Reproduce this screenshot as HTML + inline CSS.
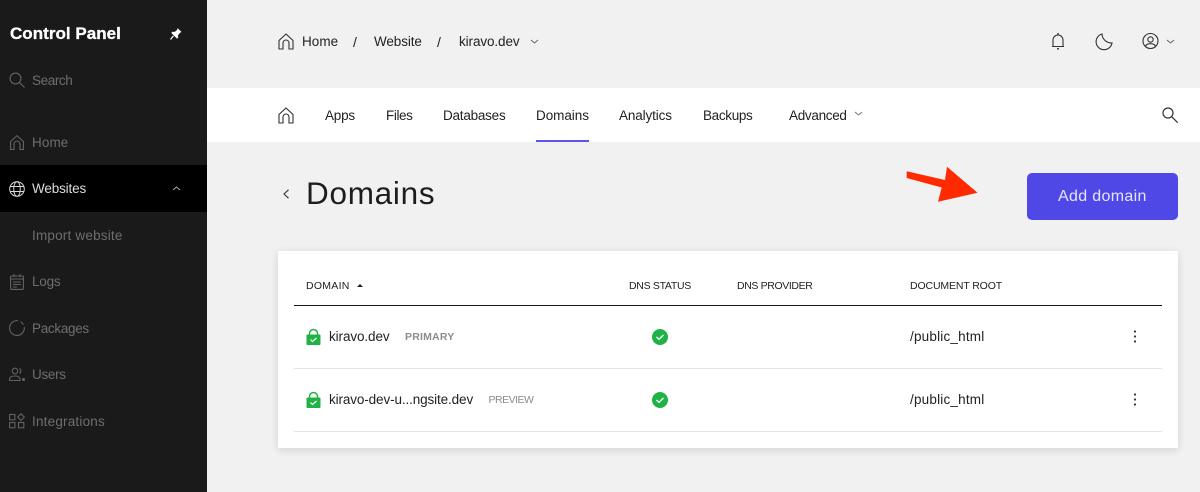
<!DOCTYPE html>
<html><head><meta charset="utf-8"><style>
html,body{margin:0;padding:0;width:1200px;height:492px;overflow:hidden;background:#f1f1f1}
body{position:relative;font-family:"Liberation Sans",sans-serif;color:#222}
.t{position:absolute;white-space:nowrap;line-height:16px;height:16px;font-size:13.5px}
.a{position:absolute;display:block}
svg{position:absolute;overflow:visible;fill:none}
.side{position:absolute;left:0;top:0;width:207px;height:492px;background:#1a1a1a}
.g{color:#6e6e6e}
.h{font-size:10.5px;color:#222}
</style></head><body>
<div class="side"></div>
<div class="a" style="left:0;top:165px;width:207px;height:47px;background:#000"></div>
<div class="t" style="left:10px;top:26px;color:#fff;font-size:17px;font-weight:bold;-webkit-text-stroke:.3px #fff;letter-spacing:.03px">Control Panel</div>
<svg style="left:168px;top:26px" width="16" height="16" viewBox="0 0 16 16"><path d="M9.500 2l4 4-1.300.6-2.200 2.600.2 2.400-1.200 1-5.700-5.700 1-1.200 2.400.2 2.600-2.200z" fill="#fff"/><path d="M5.500 9.800L2.500 13.500" stroke="#fff" stroke-width="1.200"/></svg>

<svg style="left:9px;top:72px" width="16" height="17" viewBox="0 0 16 17" stroke="#636363" stroke-width="1.100"><circle cx="6.500" cy="6.500" r="5.400"/><path d="M10.500 10.500l5 5"/></svg>
<div class="t g" style="left:32px;top:73px;letter-spacing:-.4px">Search</div>

<svg style="left:10px;top:135px" width="14" height="15" viewBox="0 0 14 15" stroke="#636363" stroke-width="1.100"><path d="M.6 14.500V6.500L7 .7l6.400 5.800v8H10V9a3 3 0 0 0-6 0v5.500z"/></svg>
<div class="t g" style="left:32px;top:135px;letter-spacing:.1px">Home</div>

<svg style="left:9px;top:181px" width="16" height="16" viewBox="0 0 16 16" stroke="#d8d8d8" stroke-width="1"><circle cx="8" cy="8" r="7.300"/><ellipse cx="8" cy="8" rx="3.300" ry="7.300"/><path d="M1.200 5.500h13.600M1.200 10.500h13.600"/></svg>
<div class="t" style="left:32px;top:181px;color:#dcdcdc;letter-spacing:-.15px">Websites</div>
<svg style="left:172px;top:186px" width="9" height="5" viewBox="0 0 9 5" stroke="#aaa" stroke-width="1"><path d="M1 4l3.500-3L8 4"/></svg>
<div class="t g" style="left:32px;top:228px;letter-spacing:.2px">Import website</div>

<svg style="left:10px;top:274px" width="14" height="16" viewBox="0 0 14 16" stroke="#636363" stroke-width="1.100"><rect x=".6" y="2" width="12.800" height="13.400" rx="1"/><path d="M4 0v3M10 0v3M.6 5h12.800M3 8h8M3 10.500h8M3 13h4"/></svg>
<div class="t g" style="left:32px;top:274px;letter-spacing:-.2px">Logs</div>

<svg style="left:9px;top:320px" width="16" height="16" viewBox="0 0 16 16" stroke="#636363" stroke-width="1.100"><path d="M9 .7a7.400 7.400 0 1 0 6.300 6.300M11.500 1.700a7.400 7.400 0 0 1 3 3"/></svg>
<div class="t g" style="left:32px;top:321px;letter-spacing:-.3px">Packages</div>

<svg style="left:9px;top:367px" width="16" height="15" viewBox="0 0 16 15" stroke="#636363" stroke-width="1.100"><circle cx="6" cy="4" r="2.800"/><path d="M10.500 1.500a3 3 0 0 1 0 5M.6 13.500v-1.500c0-2 2-3 5.400-3s4.500 1 5 2.500v2z"/><circle cx="14.500" cy="12.500" r="1" fill="#636363"/></svg>
<div class="t g" style="left:32px;top:367px;letter-spacing:-.3px">Users</div>

<svg style="left:9px;top:413px" width="16" height="16" viewBox="0 0 16 16" stroke="#636363" stroke-width="1.100"><rect x=".6" y="1.500" width="5.300" height="5.300"/><rect x=".6" y="9.500" width="5.300" height="5.300"/><rect x="9.500" y="9.500" width="5.300" height="5.300"/><path d="M12 .8l3.300 3.300L12 7.400 8.700 4.100z"/></svg>
<div class="t g" style="left:32px;top:414px;letter-spacing:.2px">Integrations</div>

<svg style="left:278px;top:33px" width="16" height="17" viewBox="0 0 16 17" stroke="#333" stroke-width="1.100"><path d="M1 16V7.500l7-6.500 7 6.500V16h-4v-6a3 3 0 0 0-6 0v6z"/></svg>
<div class="t" style="left:302px;top:34px;letter-spacing:.05px">Home</div>
<div class="t" style="left:353px;top:34px;font-size:14px">/</div>
<div class="t" style="left:374px;top:34px;letter-spacing:-.1px">Website</div>
<div class="t" style="left:437px;top:34px;font-size:14px">/</div>
<div class="t" style="left:459px;top:34px;letter-spacing:-.1px">kiravo.dev</div>
<svg style="left:530px;top:39px" width="9" height="5" viewBox="0 0 9 5" stroke="#666" stroke-width="1"><path d="M1 1l3.500 3L8 1"/></svg>

<svg style="left:1051px;top:33px" width="14" height="17" viewBox="0 0 14 17" stroke="#333" stroke-width="1.100"><path d="M2 13.500V7a5 5 0 0 1 10 0v6.500M1 13.500h12"/><path d="M7 0v2M6 15.800h2" stroke-width="1.400"/></svg>
<svg style="left:1096px;top:33px" width="17" height="17" viewBox="0 0 17 17" stroke="#333" stroke-width="1.100"><path d="M6 1A8 8 0 1 0 16 10A9.500 9.500 0 0 1 6 1z"/></svg>
<svg style="left:1142px;top:33px" width="17" height="17" viewBox="0 0 17 17" stroke="#333" stroke-width="1.100"><circle cx="8.500" cy="8" r="7.500"/><circle cx="8.500" cy="6.500" r="2.700"/><path d="M3.500 13.500c.5-2 2.500-2.800 5-2.800s4.500.8 5 2.800"/></svg>
<svg style="left:1166px;top:39px" width="9" height="5" viewBox="0 0 9 5" stroke="#666" stroke-width="1"><path d="M1 1l3.500 3L8 1"/></svg>

<div class="a" style="left:207px;top:88px;width:993px;height:54px;background:#fff"></div>
<svg style="left:278px;top:107px" width="16" height="17" viewBox="0 0 16 17" stroke="#333" stroke-width="1.100"><path d="M1 16V7.500l7-6.500 7 6.500V16h-4v-6a3 3 0 0 0-6 0v6z"/></svg>
<div class="t" style="left:325px;top:108px;letter-spacing:-.2px">Apps</div>
<div class="t" style="left:386px;top:108px;letter-spacing:-.4px">Files</div>
<div class="t" style="left:443px;top:108px;letter-spacing:-.23px">Databases</div>
<div class="t" style="left:536px;top:108px;letter-spacing:-.05px">Domains</div>
<div class="a" style="left:536px;top:140px;width:53px;height:2px;background:#5a55e8"></div>
<div class="t" style="left:619px;top:108px;letter-spacing:-.13px">Analytics</div>
<div class="t" style="left:703px;top:108px;letter-spacing:-.33px">Backups</div>
<div class="t" style="left:789px;top:108px;letter-spacing:-.3px">Advanced</div>
<svg style="left:854px;top:111px" width="9" height="5" viewBox="0 0 9 5" stroke="#777" stroke-width="1"><path d="M1 1l3.500 3L8 1"/></svg>
<svg style="left:1162px;top:107px" width="16" height="16" viewBox="0 0 16 16" stroke="#333" stroke-width="1.200"><circle cx="6" cy="6" r="5"/><path d="M9.700 9.700l6 6"/></svg>

<svg style="left:283px;top:189px" width="6" height="10" viewBox="0 0 6 10" stroke="#333" stroke-width="1.100"><path d="M5.500 .8L1 5l4.500 4.200"/></svg>
<div class="t" style="left:306px;top:174px;height:38px;line-height:38px;font-size:31.5px;color:#1d1d1d;letter-spacing:.72px">Domains</div>

<svg style="left:0;top:0" width="1200" height="492"><path d="M906.700 171.200L945 180 947 166.700 977.500 192.700 938 201.700 941.700 187.500 906.700 178z" fill="#ff2a00"/></svg>
<div class="a" style="left:1027px;top:173px;width:151px;height:47px;background:#4f48e6;border-radius:5px"></div>
<div class="t" style="left:1058px;top:189px;color:#e6e6fb;font-size:16px;letter-spacing:.33px">Add domain</div>

<div class="a" style="left:278px;top:251px;width:900px;height:197px;background:#fff;box-shadow:0 2px 8px rgba(0,0,0,.13)"></div>
<div class="t h" style="left:306px;top:278px;letter-spacing:.27px">DOMAIN</div>
<svg style="left:357px;top:284px" width="6" height="3" viewBox="0 0 6 3"><path d="M0 3l3-3 3 3z" fill="#222"/></svg>
<div class="t h" style="left:629px;top:278px;letter-spacing:-.3px">DNS STATUS</div>
<div class="t h" style="left:737px;top:278px;letter-spacing:-.37px">DNS PROVIDER</div>
<div class="t h" style="left:910px;top:278px;letter-spacing:-.13px">DOCUMENT ROOT</div>
<div class="a" style="left:294px;top:305px;width:868px;height:1px;background:#1a1a1a"></div>
<div class="a" style="left:294px;top:368px;width:868px;height:1px;background:#e3e3e3"></div>
<div class="a" style="left:294px;top:431px;width:868px;height:1px;background:#e3e3e3"></div>

<svg style="left:306px;top:329px" width="15" height="16" viewBox="0 0 15 16"><path d="M3.500 7V4.500a4 4 0 0 1 8 0V7" stroke="#1fb346" stroke-width="1.500"/><rect x=".5" y="5.500" width="14" height="10.500" rx="1" fill="#1fb346"/><path d="M4.500 10.500l2 2 4-3.500" stroke="#fff" stroke-width="1.200"/></svg>
<div class="t" style="left:329px;top:329px;letter-spacing:-.1px">kiravo.dev</div>
<div class="t" style="left:405px;top:329px;font-size:10.5px;font-weight:bold;color:#8c8c8c;letter-spacing:.2px">PRIMARY</div>
<svg style="left:652px;top:329px" width="16" height="16" viewBox="0 0 16 16"><circle cx="8" cy="8" r="8" fill="#1fb346"/><path d="M4.500 8l2.500 2.300L11.500 6" stroke="#fff" stroke-width="1.300"/></svg>
<div class="t" style="left:910px;top:329px;letter-spacing:.2px">/public_html</div>
<svg style="left:1133px;top:330px" width="4" height="13" viewBox="0 0 4 13"><circle cx="2" cy="1.500" r="1.100" fill="#333"/><circle cx="2" cy="6.500" r="1.100" fill="#333"/><circle cx="2" cy="11.500" r="1.100" fill="#333"/></svg>

<svg style="left:306px;top:392px" width="15" height="16" viewBox="0 0 15 16"><path d="M3.500 7V4.500a4 4 0 0 1 8 0V7" stroke="#1fb346" stroke-width="1.500"/><rect x=".5" y="5.500" width="14" height="10.500" rx="1" fill="#1fb346"/><path d="M4.500 10.500l2 2 4-3.500" stroke="#fff" stroke-width="1.200"/></svg>
<div class="t" style="left:329px;top:392px;letter-spacing:-.12px">kiravo-dev-u...ngsite.dev</div>
<div class="t" style="left:488.500px;top:392px;font-size:10.5px;color:#8c8c8c;letter-spacing:-.5px">PREVIEW</div>
<svg style="left:652px;top:392px" width="16" height="16" viewBox="0 0 16 16"><circle cx="8" cy="8" r="8" fill="#1fb346"/><path d="M4.500 8l2.500 2.300L11.500 6" stroke="#fff" stroke-width="1.300"/></svg>
<div class="t" style="left:910px;top:392px;letter-spacing:.2px">/public_html</div>
<svg style="left:1133px;top:393px" width="4" height="13" viewBox="0 0 4 13"><circle cx="2" cy="1.500" r="1.100" fill="#333"/><circle cx="2" cy="6.500" r="1.100" fill="#333"/><circle cx="2" cy="11.500" r="1.100" fill="#333"/></svg>
</body></html>
